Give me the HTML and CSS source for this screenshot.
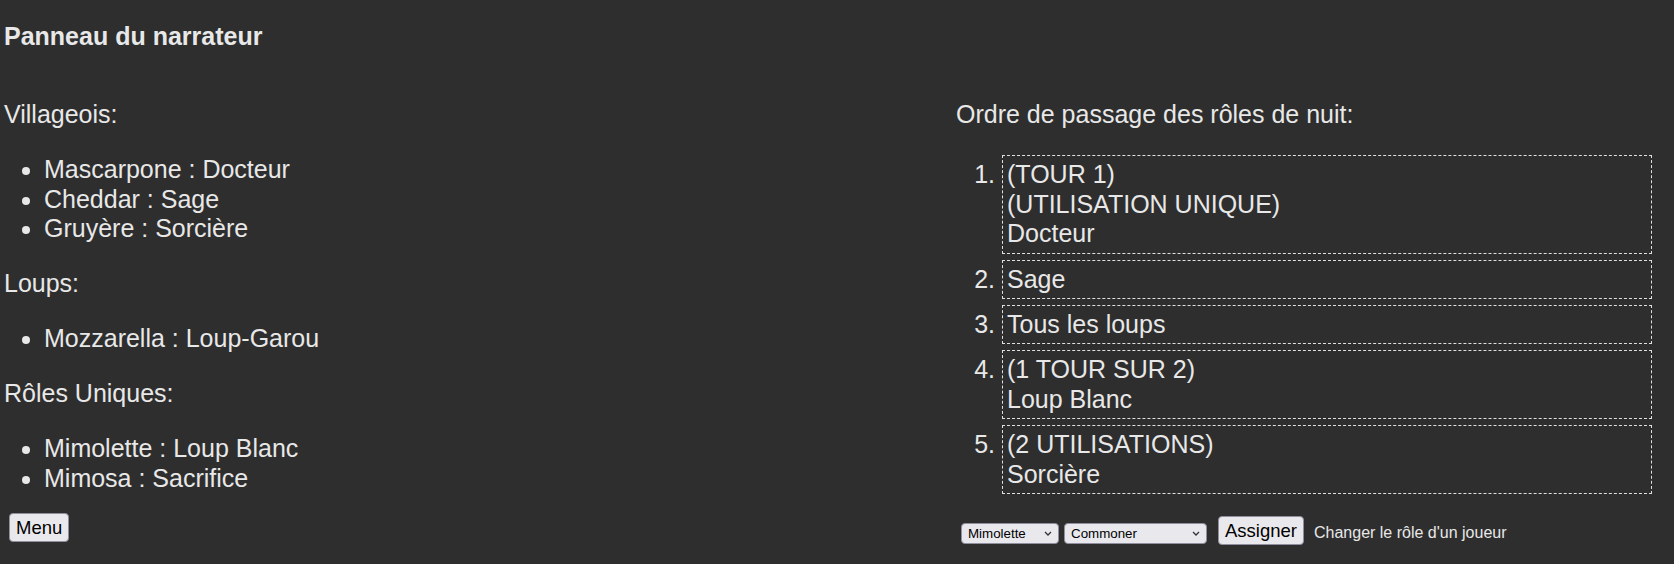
FILE: index.html
```html
<!DOCTYPE html>
<html lang="fr">
<head>
    <meta charset="UTF-8">
    <meta name="viewport" content="width=device-width, initial-scale=1.0">
    <title>Panneau du narrateur</title>
    <link rel="stylesheet" href="styles.css">
</head>
<body>
    <h1 class="title">Panneau du narrateur</h1>

    <div class="board">
        <div class="players">
            <p class="group">Villageois:</p>
            <ul class="role-list">
                <li>Mascarpone : Docteur</li>
                <li>Cheddar : Sage</li>
                <li>Gruyère : Sorcière</li>
            </ul>

            <p class="group">Loups:</p>
            <ul class="role-list">
                <li>Mozzarella : Loup-Garou</li>
            </ul>

            <p class="group">Rôles Uniques:</p>
            <ul class="role-list last">
                <li>Mimolette : Loup Blanc</li>
                <li>Mimosa : Sacrifice</li>
            </ul>

            <div class="menu-row">
                <button class="btn" onclick="window.location.href='index.html'">Menu</button>
            </div>
        </div>

        <div class="night">
            <p class="group">Ordre de passage des rôles de nuit:</p>
            <ol class="night-order">
                <li>(TOUR 1)<br>(UTILISATION UNIQUE)<br>Docteur</li>
                <li>Sage</li>
                <li>Tous les loups</li>
                <li>(1 TOUR SUR 2)<br>Loup Blanc</li>
                <li>(2 UTILISATIONS)<br>Sorcière</li>
            </ol>

            <div class="assign-row">
                <span class="select-wrap player-wrap">
                    <select id="player-select">
                        <option>Mimolette</option>
                        <option>Mascarpone</option>
                        <option>Cheddar</option>
                        <option>Gruyère</option>
                        <option>Mozzarella</option>
                        <option>Mimosa</option>
                    </select>
                    <svg class="chevron" width="8" height="5" viewBox="0 0 8 5"><path d="M1 1 L4 4 L7 1" fill="none" stroke="#333" stroke-width="1.3"/></svg>
                </span>
                <span class="select-wrap role-wrap">
                    <select id="role-select">
                        <option>Commoner</option>
                        <option>Docteur</option>
                        <option>Sage</option>
                        <option>Sorcière</option>
                        <option>Loup-Garou</option>
                        <option>Loup Blanc</option>
                        <option>Sacrifice</option>
                    </select>
                    <svg class="chevron" width="8" height="5" viewBox="0 0 8 5"><path d="M1 1 L4 4 L7 1" fill="none" stroke="#333" stroke-width="1.3"/></svg>
                </span>
                <button class="btn assign-btn">Assigner</button>
                <span class="hint">Changer le rôle d'un joueur</span>
            </div>
        </div>
    </div>
</body>
</html>
```

FILE: styles.css
```css
body {
    margin: 0;
    padding: 0 4px;
    background-color: #2e2e2e;
    color: #e8e8e8;
    font-family: "Liberation Sans", Arial, sans-serif;
    font-size: 25px;
    line-height: 29.4px;
}

.title {
    font-size: 25px;
    font-weight: bold;
    margin: 22px 0 49px;
}

.board {
    display: grid;
    grid-template-columns: 952px 696px;
}

.group {
    margin: 0;
}

.role-list {
    margin: 25.6px 0;
    padding-left: 40px;
}

.role-list.last {
    margin-bottom: 0;
}

.menu-row {
    margin-top: 18px;
    padding-left: 5px;
}

.btn {
    font-family: "Liberation Sans", Arial, sans-serif;
    font-size: 18.5px;
    line-height: 21px;
    color: #000;
    background-color: #e9e9ed;
    border: 1px solid #8f8f9d;
    border-radius: 4px;
    padding: 3px 6px;
    cursor: pointer;
}

.night-order {
    margin: 25.6px 0 0;
    padding-left: 46px;
}

.night-order li {
    border: 1px dashed #e0e0e0;
    padding: 4px 4px;
    margin-bottom: 6px;
}

.night-order li:last-child {
    margin-bottom: 0;
}

.assign-row {
    display: flex;
    align-items: center;
    height: 29px;
    margin-top: 22px;
    padding-left: 5px;
}

.select-wrap {
    position: relative;
    display: inline-block;
    height: 21px;
    margin-top: 6px;
}

.select-wrap select {
    appearance: none;
    -webkit-appearance: none;
    width: 100%;
    height: 21px;
    box-sizing: border-box;
    font-family: "Liberation Sans", Arial, sans-serif;
    font-size: 13.33px;
    color: #000;
    background-color: #e9e9ed;
    border: 1px solid #8f8f9d;
    border-radius: 4px;
    padding: 0 18px 0 6px;
    display: block;
}

.chevron {
    position: absolute;
    right: 7px;
    top: 8px;
    pointer-events: none;
}

.player-wrap {
    width: 98px;
    margin-right: 5px;
}

.role-wrap {
    width: 143px;
    margin-right: 11px;
}

.assign-btn {
    margin-right: 10px;
}

.hint {
    font-size: 16px;
    line-height: 18px;
    margin-top: 5px;
}
```
